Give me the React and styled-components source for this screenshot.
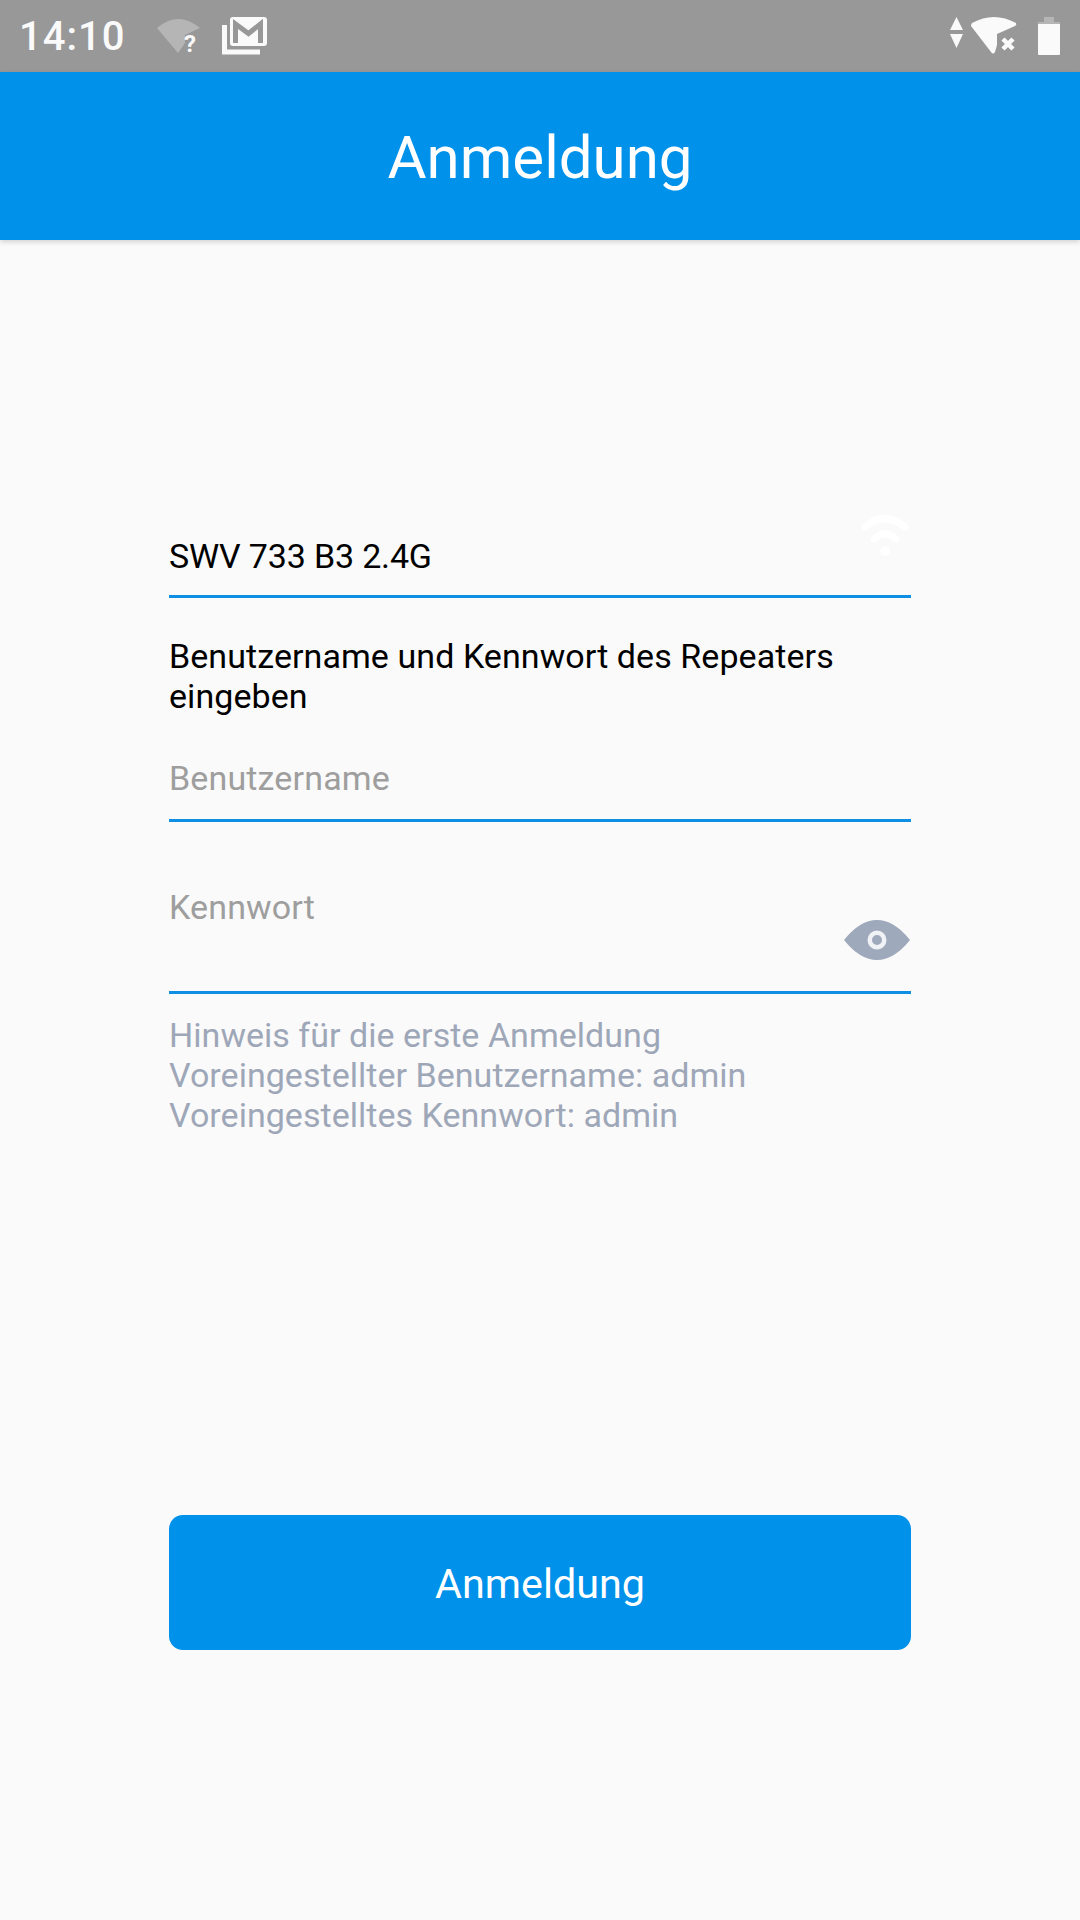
import React from "react";
import styled, { createGlobalStyle } from "styled-components";

const GlobalStyle = createGlobalStyle`
  html, body {
    margin: 0;
    padding: 0;
    background: #fafafa;
  }
  * {
    box-sizing: border-box;
  }
`;

const Screen = styled.div`
  width: 1080px;
  height: 1920px;
  overflow: hidden;
  display: flex;
  flex-direction: column;
  background: #fafafa;
  font-family: Roboto, "Liberation Sans", sans-serif;
`;

const StatusBar = styled.div`
  height: 72px;
  flex: none;
  display: flex;
  align-items: center;
  justify-content: space-between;
  padding: 0 20px 0 19px;
  background: #989898;
`;

const StatusGroup = styled.div`
  display: flex;
  align-items: center;
`;

const StatusIcon = styled.svg`
  display: block;
  margin-left: ${p => p.$gap || 0}px;
  overflow: visible;
`;

const Clock = styled.span`
  width: 138px;
  font-size: 40px;
  font-weight: 500;
  letter-spacing: 1px;
  color: #fafafa;
`;

const Header = styled.header`
  height: 168px;
  flex: none;
  display: flex;
  align-items: center;
  justify-content: center;
  padding-top: 2px;
  background: #0091ea;
  box-shadow: 0 2px 5px rgba(0, 0, 0, 0.16);
  font-size: 60px;
  color: #fff;
`;

const Form = styled.main`
  flex: 1;
  display: flex;
  flex-direction: column;
  padding: 268px 169px 0;
`;

const Field = styled.div`
  position: relative;
  height: ${p => p.$height}px;
  margin-bottom: ${p => p.$gap || 0}px;
  padding-top: ${p => p.$top || 0}px;
  border-bottom: 3px solid #0f8fe3;
  font-size: 34px;
  line-height: 40px;
  letter-spacing: ${p => (p.$placeholder ? "0.15px" : "-0.16px")};
  color: ${p => (p.$placeholder ? "#9e9e9e" : "#000")};
`;

const FieldIcon = styled.svg`
  position: absolute;
  right: ${p => p.$right}px;
  top: ${p => p.$top}px;
`;

const Prompt = styled.p`
  margin: 0 0 32px;
  font-size: 34px;
  line-height: 40px;
  letter-spacing: 0.07px;
  color: #000;
`;

const Hint = styled.p`
  margin: 21px 0 0;
  font-size: 34px;
  line-height: 40px;
  letter-spacing: 0.03px;
  color: #9ea7b8;
`;

const LoginButton = styled.button`
  width: 742px;
  height: 135px;
  margin-top: 380px;
  padding: 3px 0 0;
  border: 0;
  border-radius: 14px;
  background: #0091ea;
  color: #fff;
  font-family: inherit;
  font-size: 41.3px;
`;

export default function App() {
  return (
    <Screen>
      <GlobalStyle />
      <StatusBar>
        <StatusGroup>
          <Clock>14:10</Clock>
          <StatusIcon width="44" height="38" viewBox="0 0 44 38">
            <path d="M0 11Q21 -7 43 11L28 18V26L21 36Z" fill="#b5b5b5" />
            <text x="27" y="35" fontSize="24" fontWeight="700" fill="#fafafa" fontFamily="Roboto">?</text>
          </StatusIcon>
          <StatusIcon $gap={21} width="46" height="38" viewBox="0 0 46 38">
            <path d="M2.5 8V35H38" fill="none" stroke="#fafafa" strokeWidth="5" />
            <rect x="8" y="0" width="37" height="29" rx="3" fill="#fafafa" />
            <path d="M13.5 26V7L26.5 16.5L38.5 7V26" fill="none" stroke="#989898" strokeWidth="5" />
          </StatusIcon>
        </StatusGroup>
        <StatusGroup>
          <StatusIcon width="13" height="38" viewBox="0 0 13 38">
            <path d="M6.5 0L13 13H0Z M0 17H13L6.5 31Z" fill="#fafafa" />
          </StatusIcon>
          <StatusIcon $gap={8} width="46" height="38" viewBox="0 0 46 38">
            <path d="M1 6Q23 -6 45 6Q46 8 44 9L26 17V28L24 35Q22 38 20 35L0 9Q0 7 1 6Z" fill="#fafafa" />
            <path d="M32 22L42 32M42 22L32 32" stroke="#fafafa" strokeWidth="4.5" />
          </StatusIcon>
          <StatusIcon $gap={21} width="22" height="38" viewBox="0 0 22 38">
            <path d="M6 0H16V5H22V7H0V5H6Z" fill="#b5b5b5" />
            <path d="M0 7H22V37Q22 38 21 38H1Q0 38 0 37Z" fill="#fafafa" />
          </StatusIcon>
        </StatusGroup>
      </StatusBar>
      <Header>Anmeldung</Header>
      <Form>
        <Field $height={90} $gap={38} $top={28}>
          SWV 733 B3 2.4G
          <FieldIcon $right={1} $top={5} width="50" height="44" viewBox="0 0 50 44">
            <path d="M5 14Q25 -3 45 14M14 26Q25 16 36 26" fill="none" stroke="#fff" strokeWidth="7" strokeLinecap="round" />
            <circle cx="25" cy="38" r="5" fill="#fff" />
          </FieldIcon>
        </Field>
        <Prompt>Benutzername und Kennwort des Repeaters eingeben</Prompt>
        <Field $height={74} $gap={65} $top={10} $placeholder>
          Benutzername
        </Field>
        <Field $height={107} $placeholder>
          Kennwort
          <FieldIcon $right={0} $top={31} width="68" height="44" viewBox="0 0 68 44">
            <path d="M1 22Q17 2 34 2Q51 2 67 22Q51 42 34 42Q17 42 1 22Z" fill="#9ea9bb" />
            <circle cx="34" cy="22" r="7.25" fill="#9ea9bb" stroke="#f0f2f5" strokeWidth="4.5" />
          </FieldIcon>
        </Field>
        <Hint>
          Hinweis für die erste Anmeldung
          <br />
          Voreingestellter Benutzername: admin
          <br />
          Voreingestelltes Kennwort: admin
        </Hint>
        <LoginButton>Anmeldung</LoginButton>
      </Form>
    </Screen>
  );
}
